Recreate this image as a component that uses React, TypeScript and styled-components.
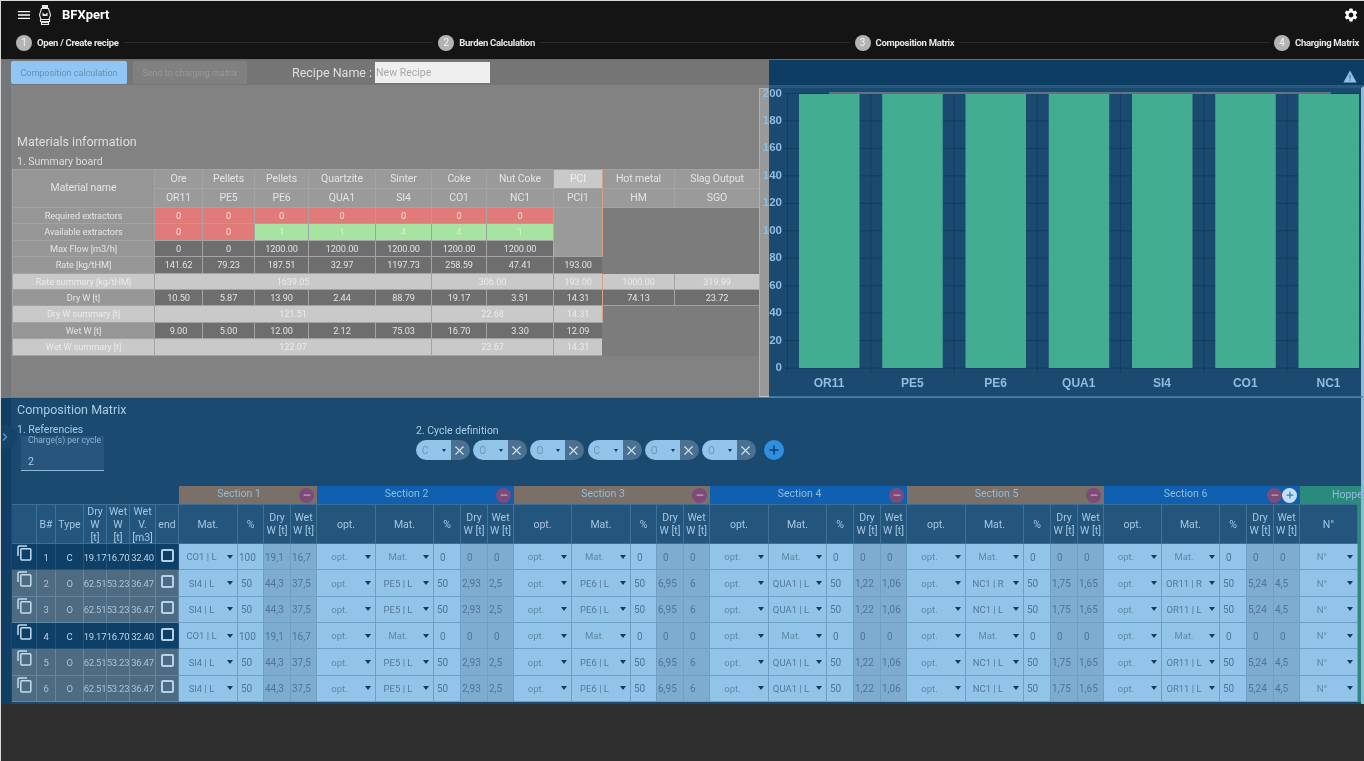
import React from "react";
import styled, { createGlobalStyle } from "styled-components";
import { X, Plus, Minus, ChevronRight } from "lucide-react";
import { MdMenu, MdSettings } from "react-icons/md";

const Global = createGlobalStyle`
  html, body { margin: 0; padding: 0; background: #2f2f2f; }
  * { box-sizing: border-box; }
`;

const App_ = styled.div`
  width: 1364px;
  height: 761px;
  overflow: hidden;
  display: flex;
  flex-direction: column;
  background: #2f2f2f;
  border-left: 1px solid #d8d8d8;
  border-top: 1px solid #d8d8d8;
  font-family: Roboto, "Liberation Sans", sans-serif;
  filter: blur(0.5px);
`;

const Header = styled.header`
  height: 58px;
  background: #141414;
  color: #fff;
  display: flex;
  flex-direction: column;
  flex: none;
`;
const TopRow = styled.div`
  height: 27px;
  display: flex;
  align-items: center;
  padding: 0 5px 0 15px;
`;
const Brand = styled.span`
  font-size: 13px;
  font-weight: 700;
  margin-left: 10px;
  flex: 1;
`;
const LogoSvg = styled.svg`
  margin-left: 6px;
`;
const Stepper = styled.div`
  display: flex;
  align-items: center;
  padding: 3px 5px 0 15px;
  height: 26px;
`;
const StepDot = styled.span`
  width: 16px;
  height: 16px;
  border-radius: 50%;
  background: #b3b3b3;
  color: #f2f2f2;
  font-size: 10px;
  display: flex;
  align-items: center;
  justify-content: center;
  flex: none;
`;
const StepLabel = styled.span`
  font-size: 9.5px;
  font-weight: 700;
  letter-spacing: -0.3px;
  color: #e8e8e8;
  margin-left: 5px;
  white-space: nowrap;
  flex: none;
`;
const StepLine = styled.span`
  flex: 1;
  height: 1px;
  background: #2c2c2c;
  margin: 0 5px;
`;

const Upper = styled.section`
  height: 338px;
  display: flex;
  flex: none;
  border-top: 1px solid #4f7391;
`;
const GrayPanel = styled.div`
  width: 768px;
  display: flex;
  flex: none;
  background: #828282;
`;
const Strip = styled.div<{ $dark?: boolean }>`
  width: 10px;
  flex: none;
  background: ${(p) => (p.$dark ? "#0f3f66" : "#747779")};
`;
const GrayBody = styled.div`
  flex: 1;
  display: flex;
  flex-direction: column;
  min-width: 0;
`;
const Toolbar = styled.div`
  height: 25px;
  flex: none;
  background: #757575;
  display: flex;
  align-items: center;
`;
const PrimaryBtn = styled.div`
  width: 116px;
  height: 23px;
  background: #8fc6f5;
  color: #6a90ae;
  border-radius: 2px;
  font-size: 9px;
  display: flex;
  align-items: center;
  justify-content: center;
`;
const GhostBtn = styled.div`
  width: 114px;
  height: 23px;
  margin-left: 6px;
  background: #808080;
  color: #979797;
  border-radius: 2px;
  font-size: 9px;
  display: flex;
  align-items: center;
  justify-content: center;
`;
const RecipeLabel = styled.span`
  margin-left: 45px;
  font-size: 12.5px;
  color: #dfdfdf;
  white-space: nowrap;
`;
const RecipeInput = styled.div`
  width: 115px;
  height: 21px;
  margin-left: 3px;
  background: #efefef;
  color: #a8a8a8;
  font-size: 10.5px;
  display: flex;
  align-items: center;
  padding-left: 1px;
`;
const GrayMain = styled.div`
  flex: 1;
  display: flex;
  min-height: 0;
`;
const InfoColumn = styled.div`
  width: 748px;
  flex: none;
  padding: 49px 0 0 1px;
`;
const Title = styled.div<{ $blue?: boolean }>`
  font-size: 12.5px;
  line-height: 16px;
  padding-left: 5px;
  color: ${(p) => (p.$blue ? "#a9cbe5" : "#dedede")};
`;
const SubTitle = styled.div<{ $blue?: boolean }>`
  font-size: 10.5px;
  line-height: 12px;
  margin: 6px 0 1px;
  padding-left: 5px;
  color: ${(p) => (p.$blue ? "#a9cbe5" : "#dedede")};
`;
const CycleTitle = styled.div`
  font-size: 10.5px;
  line-height: 12px;
  color: #a9cbe5;
`;
const ChartFrame = styled.div`
  flex: 1;
  margin-top: 3px;
  background: #999;
  border-top: 1px solid #b0b0b0;
  border-left: 1px solid #b0b0b0;
  border-bottom: 1px solid #b5c4cf;
`;

const Summary = styled.table`
  width: 747px;
  table-layout: fixed;
  border-collapse: collapse;
`;
const Col = styled.col<{ $w: number }>`
  width: ${(p) => p.$w}px;
`;

type Kind = "label" | "head" | "value" | "red" | "green" | "sum" | "sumLabel" | "pciHead" | "blank" | "void";
const kindBg: Record<Kind, string> = {
  label: "#969696",
  head: "#9a9a9a",
  value: "#6e6e6e",
  red: "#e07b79",
  green: "#a7e4a1",
  sum: "#c9c9c9",
  sumLabel: "#c9c9c9",
  pciHead: "#c9c9c9",
  blank: "#9a9a9a",
  void: "#7c7c7c",
};
const kindFg: Record<Kind, string> = {
  label: "#e4e4e4",
  head: "#e4e4e4",
  value: "#e2e2e2",
  red: "#f2dcdc",
  green: "#d4f0d0",
  sum: "#eaeaea",
  sumLabel: "#eaeaea",
  pciHead: "#efefef",
  blank: "#eee",
  void: "#eee",
};
const Td = styled.td<{ $k: Kind; $pci?: boolean; $tall?: boolean }>`
  height: ${(p) => (p.$tall ? "19px" : "16.4px")};
  padding: 0;
  text-align: center;
  vertical-align: middle;
  font-size: ${(p) => (p.$tall ? "10.5px" : "9.2px")};
  line-height: 1;
  letter-spacing: -0.1px;
  white-space: nowrap;
  background: ${(p) => kindBg[p.$k]};
  color: ${(p) => kindFg[p.$k]};
  border: 1px solid ${(p) => (p.$k === "void" ? "#7c7c7c" : "#a3a3a3")};
  ${(p) => (p.$pci ? "border-left: 1px solid #d9a283; border-right: 1px solid #d9a283;" : "")}
`;

const cells = (k: Kind, vals: string[]) =>
  vals.map((v, i) => (
    <Td key={i} $k={k}>
      {v}
    </Td>
  ));

const ChartPanel = styled.div`
  flex: 1;
  display: flex;
  flex-direction: column;
  background: #0e3d63;
  min-width: 0;
`;
const AlertBar = styled.div`
  height: 26px;
  flex: none;
  display: flex;
  justify-content: flex-end;
  align-items: flex-end;
  padding: 0 7px 2px 0;
  border-bottom: 1px solid #2a5b82;
`;
const ChartBody = styled.div`
  flex: 1;
  background: #1a4a70;
  border-top: 2px solid #265880;
  border-right: 3px solid #8fb7d6;
  border-bottom: 1px solid #3f7299;
`;
const ChartSvg = styled.svg`
  display: block;
  overflow: visible;
`;
const AxisText = styled.text<{ $bold?: boolean }>`
  font-family: "Liberation Sans", Arial, sans-serif;
  font-size: ${(p) => (p.$bold ? "12px" : "11.5px")};
  font-weight: 700;
  fill: #8fbde0;
`;

const Lower = styled.section`
  height: 307px;
  flex: none;
  display: flex;
  position: relative;
  background: #1a4a70;
  border-top: 1px solid #6f7a80;
  border-right: 3px solid #8fb7d6;
`;
const Chevron = styled.span`
  position: absolute;
  left: -8px;
  top: 27px;
  width: 24px;
  height: 24px;
  border-radius: 50%;
  background: #154468;
  color: #3f9be8;
  display: flex;
  align-items: center;
  justify-content: center;
`;
const LowerBody = styled.div`
  flex: 1;
  min-width: 0;
  padding: 4px 0 0 1px;
`;
const Defs = styled.div`
  height: 68px;
  display: flex;
`;
const RefColumn = styled.div`
  width: 404px;
  flex: none;
`;
const CycleColumn = styled.div`
  padding-top: 7px;
`;
const ChargeField = styled.div`
  width: 83px;
  height: 35px;
  margin: -1px 0 0 9px;
  background: #27557d;
  border-bottom: 1px solid #8fb8d8;
  padding: 0 0 0 7px;
  color: #a9cbe5;
`;
const ChargeLabel = styled.div`
  font-size: 8.5px;
  line-height: 9px;
  color: #8db4d3;
`;
const ChargeValue = styled.div`
  font-size: 10.5px;
  margin-top: 10px;
`;
const Pills = styled.div`
  display: flex;
  align-items: center;
  gap: 3.2px;
  margin-top: 3px;
`;
const Pill = styled.div`
  width: 54px;
  height: 20px;
  display: flex;
  border-radius: 10px;
  overflow: hidden;
`;
const PillSelect = styled.div`
  width: 35px;
  background: #92c3e8;
  color: #6d96b6;
  font-size: 10px;
  display: flex;
  align-items: center;
  justify-content: space-between;
  padding: 0 5px 0 6px;
`;
const PillClose = styled.div`
  flex: 1;
  background: #4a7192;
  color: #cfe3f3;
  display: flex;
  align-items: center;
  padding-left: 1px;
`;
const Caret = styled.span<{ $small?: boolean }>`
  flex: none;
  width: 0;
  height: 0;
  border-left: ${(p) => (p.$small ? 2.5 : 3)}px solid transparent;
  border-right: ${(p) => (p.$small ? 2.5 : 3)}px solid transparent;
  border-top: ${(p) => (p.$small ? 3 : 4)}px solid #1b3a55;
`;
const AddPill = styled.div`
  width: 20px;
  height: 20px;
  margin-left: 5px;
  border-radius: 50%;
  background: #2d8fe0;
  color: #123c60;
  display: flex;
  align-items: center;
  justify-content: center;
`;

const colTemplate = [
  25, 19, 28, 23, 23, 26, 23,
  59, 26, 27, 26,
  59, 58, 27, 27, 26,
  58, 59, 26, 27, 26,
  59, 58, 27, 27, 26,
  59, 58, 27, 27, 26,
  58, 58, 27, 27, 26,
  58, 3,
];
const Matrix = styled.div`
  display: grid;
  grid-template-columns: ${colTemplate.map((c) => c + "px").join(" ")};
  grid-template-rows: 18px 40px repeat(6, 26.35px);
`;
const SectionHead = styled.div<{ $bg: string; $span: number }>`
  grid-column: span ${(p) => p.$span};
  background: ${(p) => p.$bg};
  color: #90bbdf;
  font-size: 10.5px;
  display: flex;
  align-items: center;
  padding-right: 3px;
  overflow: hidden;
  white-space: nowrap;
`;
const SectionName = styled.span`
  flex: 1;
  text-align: center;
  margin-top: -3px;
`;
const HopperName = styled.span`
  padding-left: 32px;
  margin-top: -1px;
`;
const RoundBtn = styled.span<{ $plus?: boolean }>`
  width: 15px;
  height: 15px;
  border-radius: 50%;
  flex: none;
  background: ${(p) => (p.$plus ? "#c5def2" : "#7e4a78")};
  color: ${(p) => (p.$plus ? "#2f7fc0" : "#b9a7bd")};
  display: flex;
  align-items: center;
  justify-content: center;
`;
const Spacer = styled.div<{ $span: number }>`
  grid-column: span ${(p) => p.$span};
`;
const ColHead = styled.div<{ $narrow?: boolean }>`
  background: #24557d;
  color: #a5c6e0;
  border-right: 1px solid #3f7096;
  border-top: 1px solid #3f7096;
  border-bottom: 1px solid #3f7096;
  font-size: 10.5px;
  line-height: 13px;
  text-align: center;
  display: flex;
  align-items: center;
  justify-content: center;
  overflow: hidden;
  padding: 0 ${(p) => (p.$narrow ? 2 : 0)}px;
`;
const RowCell = styled.div<{ $c: boolean }>`
  background: ${(p) => (p.$c ? "#0e3f66" : "#4e6b82")};
  color: ${(p) => (p.$c ? "#bcd5e9" : "#a9c2d6")};
  border-right: 1px solid ${(p) => (p.$c ? "#1f5379" : "#5f86a4")};
  border-bottom: 1px solid ${(p) => (p.$c ? "#1f5379" : "#5f86a4")};
  font-size: 9.5px;
  letter-spacing: -0.3px;
  padding-top: 1px;
  display: flex;
  align-items: center;
  justify-content: center;
  white-space: nowrap;
  overflow: hidden;
`;
const CopyCell = styled(RowCell)`
  align-items: flex-start;
  color: #c2dcef;
`;
const Check = styled.span`
  width: 13px;
  height: 13px;
  margin-top: -4px;
  border: 2px solid #b4d3ea;
  border-radius: 2px;
`;
const SelectCell = styled.div<{ $muted: boolean }>`
  background: #92c3e8;
  border-right: 1px solid #6f9fc4;
  border-bottom: 1px solid #6f9fc4;
  color: ${(p) => (p.$muted ? "#6189a8" : "#55799a")};
  font-size: 9.5px;
  display: flex;
  align-items: center;
  padding-right: 4px;
  white-space: nowrap;
  overflow: hidden;
`;
const SelectText = styled.span`
  flex: 1;
  text-align: center;
`;
const SelectGap = styled.span`
  width: 3px;
  flex: none;
`;
const NumCell = styled.div<{ $dark?: boolean; $pad: number }>`
  background: ${(p) => (p.$dark ? "#7eabd0" : "#92c3e8")};
  border-right: 1px solid #6f9fc4;
  border-bottom: 1px solid #6f9fc4;
  color: #4f7698;
  font-size: 10px;
  display: flex;
  align-items: center;
  padding-top: 1px;
  padding-left: ${(p) => p.$pad}px;
  white-space: nowrap;
  overflow: hidden;
`;
const HopEdge = styled.div`
  background: #2a8a7c;
`;

const Sel = ({ text }: { text: string }) => (
  <SelectCell $muted={text === "opt." || text === "Mat." || text === "N°"}>
    <SelectText>{text}</SelectText>
    <SelectGap />
    <Caret />
  </SelectCell>
);
const padFor = (s: string) => (s.length >= 3 ? 1 : s.length === 2 ? 3 : 6);
const Num = ({ v, dark }: { v: string; dark?: boolean }) => (
  <NumCell $dark={dark} $pad={padFor(v)}>
    {v}
  </NumCell>
);

const CopyIcon = () => (
  <svg width="15" height="16" viewBox="0 0 15 16" fill="none" stroke="currentColor" strokeWidth="1.5">
    <path d="M1 11V2.2C1 1.5 1.5 1 2.2 1H10" />
    <rect x="3.8" y="3.8" width="10" height="11.2" rx="1" />
  </svg>
);

type Mat = [string, string, string, string];
const secZero: Mat = ["Mat.", "0", "0", "0"];
const sec = (s: string, d: string, w: string): Mat => [s, "50", d, w];
const oL = [sec("PE5 | L", "2,93", "2,5"), sec("PE6 | L", "6,95", "6"), sec("QUA1 | L", "1,22", "1,06"), sec("NC1 | L", "1,75", "1,65"), sec("OR11 | L", "5,24", "4,5")];
const oR = [sec("PE5 | L", "2,93", "2,5"), sec("PE6 | L", "6,95", "6"), sec("QUA1 | L", "1,22", "1,06"), sec("NC1 | R", "1,75", "1,65"), sec("OR11 | R", "5,24", "4,5")];
const zeros = [secZero, secZero, secZero, secZero, secZero];
const cV = ["19.17", "16.70", "32.40"];
const oV = ["62.51", "53.23", "36.47"];
const cS: Mat = ["CO1 | L", "100", "19,1", "16,7"];
const oS: Mat = ["SI4 | L", "50", "44,3", "37,5"];

const rows: { b: string; t: string; v: string[]; s1: Mat; secs: Mat[] }[] = [
  { b: "1", t: "C", v: cV, s1: cS, secs: zeros },
  { b: "2", t: "O", v: oV, s1: oS, secs: oR },
  { b: "3", t: "O", v: oV, s1: oS, secs: oL },
  { b: "4", t: "C", v: cV, s1: cS, secs: zeros },
  { b: "5", t: "O", v: oV, s1: oS, secs: oL },
  { b: "6", t: "O", v: oV, s1: oS, secs: oL },
];

const MAT_COLS = ["Mat.", "%", "Dry W [t]", "Wet W [t]"];
const TAN = "#7a7068";
const BLUE = "#0f60b0";
const TICKS = [0, 20, 40, 60, 80, 100, 120, 140, 160, 180, 200];

const Chart = () => {
  const names = ["OR11", "PE5", "PE6", "QUA1", "SI4", "CO1", "NC1"];
  const y = (v: number) => 280 - (v / 200) * 274.5;
  return (
    <ChartSvg width="592" height="305" viewBox="0 0 592 305">
      {TICKS.map((v) => (
        <line key={v} x1="14" x2="592" y1={y(v)} y2={y(v)} stroke="#133c5f" strokeWidth="1" />
      ))}
      {Array.from({ length: 8 }).map((_, i) => (
        <line key={i} x1={18.5 + i * 83.25} x2={18.5 + i * 83.25} y1={5} y2={285} stroke="#133c5f" strokeWidth="1" />
      ))}
      <line x1="60" x2="562" y1={5} y2={5} stroke="#7d8488" strokeWidth="1.5" />
      {names.map((n, i) => (
        <g key={n}>
          <rect x={30 + i * 83.25} y={6} width={60.5} height={274} fill="#42ad90" />
          <AxisText $bold x={60 + i * 83.25} y={299} textAnchor="middle">
            {n}
          </AxisText>
        </g>
      ))}
      {TICKS.map((v) => (
        <AxisText key={v} x="13" y={y(v) + 3} textAnchor="end">
          {v}
        </AxisText>
      ))}
    </ChartSvg>
  );
};

const Logo = () => (
  <LogoSvg width="14" height="22" viewBox="0 0 14 22" fill="none" stroke="#e8e8e8" strokeWidth="1.1">
    <path d="M4.5 1.5h5v3h-5z" fill="#e8e8e8" />
    <path d="M3.5 4.5h7l2 6.5-1.5 4.5h-8L1.5 11z" />
    <path d="M4.5 8.5l2.5 2 2.5-2v3.5h-5z" fill="#e8e8e8" stroke="none" />
    <path d="M2.5 15.5h9v2h-9zM3.5 17.5h7v3h-7z" fill="#141414" />
    <path d="M3 18.6h8" />
  </LogoSvg>
);

const steps = ["Open / Create recipe", "Burden Calculation", "Composition Matrix", "Charging Matrix"];
const LEFT_HEADS = ["", "B#", "Type", "Dry W [t]", "Wet W [t]", "Wet V. [m3]", "end"];

export default function App() {
  return (
    <App_>
      <Global />
      <Header>
        <TopRow>
          <MdMenu size={16} />
          <Logo />
          <Brand>BFXpert</Brand>
          <MdSettings size={16} />
        </TopRow>
        <Stepper>
          {steps.map((s, i) => (
            <React.Fragment key={s}>
              <StepDot>{i + 1}</StepDot>
              <StepLabel>{s}</StepLabel>
              {i < 3 && <StepLine />}
            </React.Fragment>
          ))}
        </Stepper>
      </Header>

      <Upper>
        <GrayPanel>
          <Strip />
          <GrayBody>
            <Toolbar>
              <PrimaryBtn>Composition calculation</PrimaryBtn>
              <GhostBtn>Send to charging matrix</GhostBtn>
              <RecipeLabel>Recipe Name :</RecipeLabel>
              <RecipeInput>New Recipe</RecipeInput>
            </Toolbar>
            <GrayMain>
              <InfoColumn>
                <Title>Materials information</Title>
                <SubTitle>1. Summary board</SubTitle>
                <Summary>
                  <colgroup>
                    {[142, 48, 52, 54, 67, 56, 55, 67, 49, 72, 85].map((w, i) => (
                      <Col key={i} $w={w} />
                    ))}
                  </colgroup>
                  <tbody>
                    <tr>
                      <Td $k="label" rowSpan={2} $tall>
                        Material name
                      </Td>
                      {["Ore", "Pellets", "Pellets", "Quartzite", "Sinter", "Coke", "Nut Coke"].map((v, i) => (
                        <Td key={i} $k="head" $tall>
                          {v}
                        </Td>
                      ))}
                      <Td $k="pciHead" $pci $tall>
                        PCI
                      </Td>
                      <Td $k="head" $tall>
                        Hot metal
                      </Td>
                      <Td $k="head" $tall>
                        Slag Output
                      </Td>
                    </tr>
                    <tr>
                      {["OR11", "PE5", "PE6", "QUA1", "SI4", "CO1", "NC1"].map((v) => (
                        <Td key={v} $k="head" $tall>
                          {v}
                        </Td>
                      ))}
                      <Td $k="head" $pci $tall>
                        PCI1
                      </Td>
                      <Td $k="head" $tall>
                        HM
                      </Td>
                      <Td $k="head" $tall>
                        SGO
                      </Td>
                    </tr>
                    <tr>
                      <Td $k="label">Required extractors</Td>
                      {cells("red", ["0", "0", "0", "0", "0", "0", "0"])}
                      <Td $k="blank" $pci rowSpan={3} />
                      <Td $k="void" colSpan={2} rowSpan={4} />
                    </tr>
                    <tr>
                      <Td $k="label">Available extractors</Td>
                      {cells("red", ["0", "0"])}
                      {cells("green", ["1", "1", "4", "4", "1"])}
                    </tr>
                    <tr>
                      <Td $k="label">Max Flow [m3/h]</Td>
                      {cells("value", ["0", "0", "1200.00", "1200.00", "1200.00", "1200.00", "1200.00"])}
                    </tr>
                    <tr>
                      <Td $k="label">Rate [kg/tHM]</Td>
                      {cells("value", ["141.62", "79.23", "187.51", "32.97", "1197.73", "258.59", "47.41"])}
                      <Td $k="value" $pci>
                        193.00
                      </Td>
                    </tr>
                    <tr>
                      <Td $k="sumLabel">Rate summary [kg/tHM]</Td>
                      <Td $k="sum" colSpan={5}>
                        1639.05
                      </Td>
                      <Td $k="sum" colSpan={2}>
                        306.00
                      </Td>
                      <Td $k="sum" $pci>
                        193.00
                      </Td>
                      <Td $k="sum">1000.00</Td>
                      <Td $k="sum">319.99</Td>
                    </tr>
                    <tr>
                      <Td $k="label">Dry W [t]</Td>
                      {cells("value", ["10.50", "5.87", "13.90", "2.44", "88.79", "19.17", "3.51"])}
                      <Td $k="value" $pci>
                        14.31
                      </Td>
                      {cells("value", ["74.13", "23.72"])}
                    </tr>
                    <tr>
                      <Td $k="sumLabel">Dry W summary [t]</Td>
                      <Td $k="sum" colSpan={5}>
                        121.51
                      </Td>
                      <Td $k="sum" colSpan={2}>
                        22.68
                      </Td>
                      <Td $k="sum" $pci>
                        14.31
                      </Td>
                      <Td $k="void" colSpan={2} rowSpan={3} />
                    </tr>
                    <tr>
                      <Td $k="label">Wet W [t]</Td>
                      {cells("value", ["9.00", "5.00", "12.00", "2.12", "75.03", "16.70", "3.30"])}
                      <Td $k="value" $pci>
                        12.09
                      </Td>
                    </tr>
                    <tr>
                      <Td $k="sumLabel">Wet W summary [t]</Td>
                      <Td $k="sum" colSpan={5}>
                        122.07
                      </Td>
                      <Td $k="sum" colSpan={2}>
                        23.67
                      </Td>
                      <Td $k="sum" $pci>
                        14.31
                      </Td>
                    </tr>
                  </tbody>
                </Summary>
              </InfoColumn>
              <ChartFrame />
            </GrayMain>
          </GrayBody>
        </GrayPanel>
        <ChartPanel>
          <AlertBar>
            <svg width="14" height="13" viewBox="0 0 14 13">
              <path d="M7 .5L13.6 12.5H.4z" fill="#8fc0e6" />
              <path d="M6.5 4.5h1v4h-1zM6.5 9.5h1v1.2h-1z" fill="#3a6c94" />
            </svg>
          </AlertBar>
          <ChartBody>
            <Chart />
          </ChartBody>
        </ChartPanel>
      </Upper>

      <Lower>
        <Strip $dark />
        <Chevron>
          <ChevronRight size={12} strokeWidth={3} />
        </Chevron>
        <LowerBody>
          <Title $blue>Composition Matrix</Title>
          <Defs>
            <RefColumn>
              <SubTitle $blue>1. Referencies</SubTitle>
              <ChargeField>
                <ChargeLabel>Charge(s) per cycle</ChargeLabel>
                <ChargeValue>2</ChargeValue>
              </ChargeField>
            </RefColumn>
            <CycleColumn>
              <CycleTitle>2. Cycle definition</CycleTitle>
              <Pills>
                {["C", "O", "O", "C", "O", "O"].map((c, i) => (
                  <Pill key={i}>
                    <PillSelect>
                      {c}
                      <Caret $small />
                    </PillSelect>
                    <PillClose>
                      <X size={15} strokeWidth={1.7} />
                    </PillClose>
                  </Pill>
                ))}
                <AddPill>
                  <Plus size={14} strokeWidth={2.6} />
                </AddPill>
              </Pills>
            </CycleColumn>
          </Defs>

          <Matrix>
            <Spacer $span={7} />
            {[1, 2, 3, 4, 5, 6].map((n) => (
              <SectionHead key={n} $bg={n % 2 ? TAN : BLUE} $span={n === 1 ? 4 : 5}>
                <SectionName>Section {n}</SectionName>
                <RoundBtn>
                  <Minus size={10} strokeWidth={3} />
                </RoundBtn>
                {n === 6 && (
                  <RoundBtn $plus>
                    <Plus size={10} strokeWidth={3} />
                  </RoundBtn>
                )}
              </SectionHead>
            ))}
            <SectionHead $bg="#2a8a7c" $span={2}>
              <HopperName>Hoppe</HopperName>
            </SectionHead>

            {LEFT_HEADS.map((h, i) => (
              <ColHead key={i} $narrow={i >= 3 && i <= 5}>
                {h}
              </ColHead>
            ))}
            {MAT_COLS.map((h) => (
              <ColHead key={h}>{h}</ColHead>
            ))}
            {[0, 1, 2, 3, 4].flatMap((s) =>
              ["opt.", ...MAT_COLS].map((h) => <ColHead key={s + h}>{h}</ColHead>)
            )}
            <ColHead>N°</ColHead>
            <HopEdge />

            {rows.map((r) => {
              const c = r.t === "C";
              return (
                <React.Fragment key={r.b}>
                  <CopyCell $c={c}>
                    <CopyIcon />
                  </CopyCell>
                  <RowCell $c={c}>{r.b}</RowCell>
                  <RowCell $c={c}>{r.t}</RowCell>
                  {r.v.map((x, i) => (
                    <RowCell $c={c} key={i}>
                      {x}
                    </RowCell>
                  ))}
                  <RowCell $c={c}>
                    <Check />
                  </RowCell>
                  <Sel text={r.s1[0]} />
                  <Num v={r.s1[1]} />
                  <Num v={r.s1[2]} dark />
                  <Num v={r.s1[3]} dark />
                  {r.secs.map((m, i) => (
                    <React.Fragment key={i}>
                      <Sel text="opt." />
                      <Sel text={m[0]} />
                      <Num v={m[1]} />
                      <Num v={m[2]} dark />
                      <Num v={m[3]} dark />
                    </React.Fragment>
                  ))}
                  <Sel text="N°" />
                  <HopEdge />
                </React.Fragment>
              );
            })}
          </Matrix>
        </LowerBody>
      </Lower>
    </App_>
  );
}
